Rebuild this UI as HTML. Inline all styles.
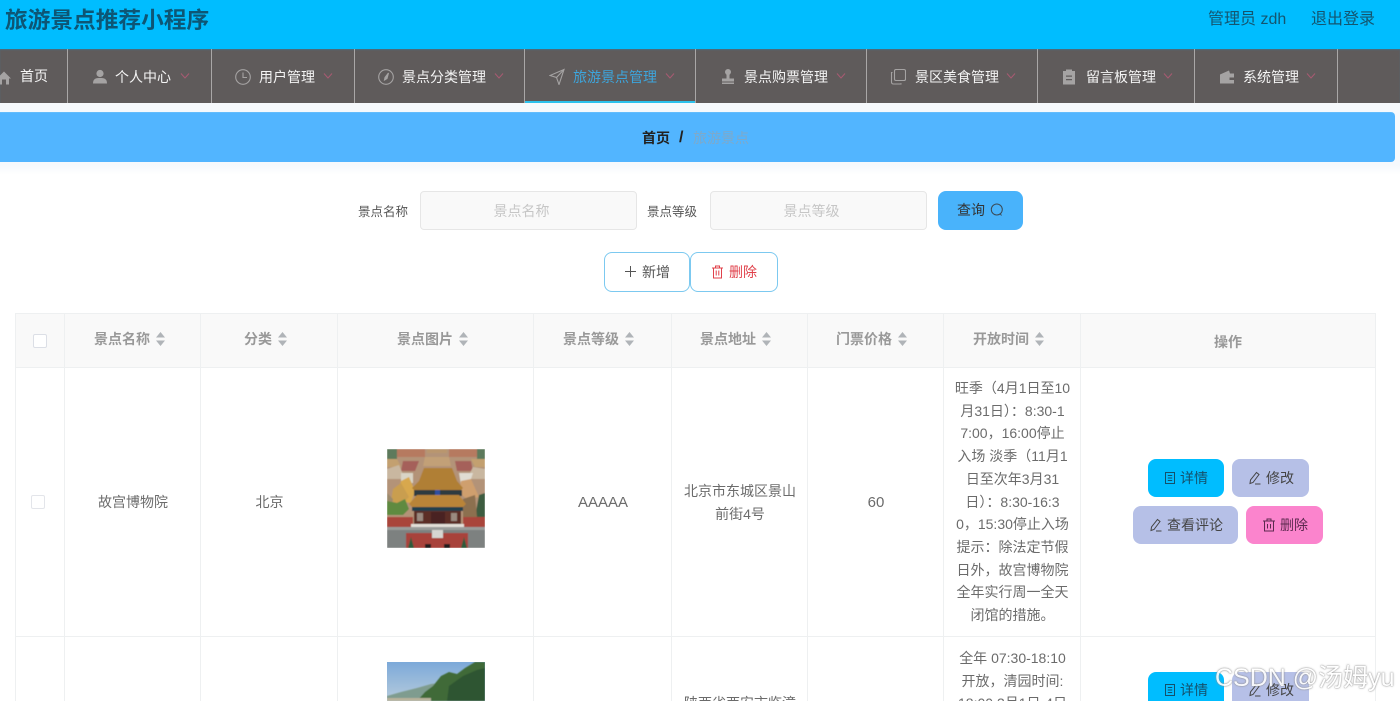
<!DOCTYPE html>
<html lang="zh"><head><meta charset="utf-8"><title>旅游景点推荐小程序</title>
<style>
*{box-sizing:border-box}
html{margin:0;padding:0;width:1400px;height:701px;overflow:hidden}
body{margin:0;padding:0;width:1400px;height:701px;overflow:hidden;position:relative;background:#fff;font-family:"Liberation Sans","Noto Sans CJK SC",sans-serif;color:#666}
.a{position:absolute;white-space:nowrap}
.c{position:absolute;text-align:center}
.nav{position:absolute;top:49px;height:54px;left:0;width:1400px;background:#5f5b5b;box-shadow:inset 0 1px 1px #4a6f80}
.sep{position:absolute;top:49px;width:1px;height:54px;background:#a9a7a7}
.ni{position:absolute;top:68px;font-size:14px;line-height:18px;color:#f4f4f4;white-space:nowrap}
.chev{position:absolute;top:73px;width:10px;height:6px}
.nicon{position:absolute;top:68px;width:16px;height:17px}
.line{position:absolute;background:#eef0f1}
.th{position:absolute;top:330px;font-size:14px;line-height:18px;font-weight:700;color:#999;white-space:nowrap}
.sort{position:absolute;top:332px;width:9px;height:14px}
.td{position:absolute;font-size:14px;color:#6b6b6b;text-align:center;line-height:22.7px}
.btn{position:absolute;height:38px;border-radius:8px;font-size:14px;line-height:38px;color:#444;white-space:nowrap}
.btn svg{position:absolute;top:12px;width:14px;height:14px}
.btn span{position:absolute;top:0}
</style></head><body>
<div class="a" style="left:0;top:0;width:1400px;height:49px;background:#00bdff"></div>
<div class="a" style="left:5px;top:6px;font-size:22.7px;line-height:28px;font-weight:700;color:#0d5675">旅游景点推荐小程序</div>
<div class="a" style="left:1208px;top:10px;font-size:16px;line-height:20px;color:#14556f">管理员 zdh</div>
<div class="a" style="left:1311px;top:10px;font-size:16px;line-height:20px;color:#14556f">退出登录</div>

<div class="nav"></div>
<div class="sep" style="left:67px"></div><div class="sep" style="left:211px"></div><div class="sep" style="left:354px"></div><div class="sep" style="left:524px"></div><div class="sep" style="left:695px"></div><div class="sep" style="left:866px"></div><div class="sep" style="left:1037px"></div><div class="sep" style="left:1194px"></div><div class="sep" style="left:1337px"></div>
<div class="a" style="left:525px;top:101px;width:170px;height:2px;background:#2cc1ec"></div>

<svg class="nicon" style="left:-4px;top:69px" viewBox="0 0 16 16"><path d="M8 2 15 9H13V15H10V10H6V15H3V9H1Z" fill="#a5a3a3"/></svg>
<div class="ni" style="left:20px;top:67px">首页</div>
<svg class="nicon" style="left:92px" viewBox="0 0 16 16"><circle cx="8" cy="5" r="3.6" fill="#a5a3a3"/><path d="M1 15C1 10 4 9.500 8 9.500S15 10 15 15Z" fill="#a5a3a3"/></svg>
<div class="ni" style="left:115px">个人中心</div>
<svg class="nicon" style="left:235px" viewBox="0 0 16 16" fill="none" stroke="#a5a3a3" stroke-width="1.100"><circle cx="8" cy="8.500" r="7.300"/><path d="M8 4V9H12"/></svg>
<div class="ni" style="left:259px">用户管理</div>
<svg class="nicon" style="left:378px" viewBox="0 0 16 16" fill="none" stroke="#a5a3a3" stroke-width="1.100"><circle cx="8" cy="8.500" r="7.300"/><path d="M10.500 4.500 7 9 6.500 11.500 9 10Z" fill="#a5a3a3"/></svg>
<div class="ni" style="left:402px">景点分类管理</div>
<svg class="nicon" style="left:549px" viewBox="0 0 16 16" fill="none" stroke="#a5a3a3" stroke-width="1.100"><path d="M15 1 1 7 7.500 9 10 16Z"/><path d="M7.500 9 15 1"/></svg>
<div class="ni" style="left:573px;color:#3da5dc">旅游景点管理</div>
<svg class="nicon" style="left:720px" viewBox="0 0 16 16"><circle cx="8" cy="3.500" r="3" fill="#a5a3a3"/><path d="M6.500 6H9.500V10H14V13H2V10H6.500ZM2 14H14V15.500H2Z" fill="#a5a3a3"/></svg>
<div class="ni" style="left:744px">景点购票管理</div>
<svg class="nicon" style="left:890px" viewBox="0 0 16 16" fill="none" stroke="#a5a3a3" stroke-width="1.100"><rect x="4.500" y="1" width="11" height="11" rx="1.500"/><path d="M2.500 4H1.500V13.500Q1.500 15.500 3.500 15.500H11V14.800"/></svg>
<div class="ni" style="left:915px">景区美食管理</div>
<svg class="nicon" style="left:1061px" viewBox="0 0 16 16"><path d="M2 2.500H5V1H11V2.500H14V16H2ZM5 7V8.200H11V7ZM5 10.500V11.700H11V10.500Z" fill="#a5a3a3"/></svg>
<div class="ni" style="left:1086px">留言板管理</div>
<svg class="nicon" style="left:1219px" viewBox="0 0 16 16"><path d="M1 6 10 2 11 5H15V15H1ZM10.500 9V11.500H15V9Z" fill="#a5a3a3"/></svg>
<div class="ni" style="left:1243px">系统管理</div>

<svg class="chev" style="left:180px" viewBox="0 0 10 6" fill="none" stroke="#a85a72" stroke-width="1"><path d="M1 .5 5 5 9 .5"/></svg>
<svg class="chev" style="left:323px" viewBox="0 0 10 6" fill="none" stroke="#a85a72" stroke-width="1"><path d="M1 .5 5 5 9 .5"/></svg>
<svg class="chev" style="left:494px" viewBox="0 0 10 6" fill="none" stroke="#a85a72" stroke-width="1"><path d="M1 .5 5 5 9 .5"/></svg>
<svg class="chev" style="left:665px" viewBox="0 0 10 6" fill="none" stroke="#a85a72" stroke-width="1"><path d="M1 .5 5 5 9 .5"/></svg>
<svg class="chev" style="left:836px" viewBox="0 0 10 6" fill="none" stroke="#a85a72" stroke-width="1"><path d="M1 .5 5 5 9 .5"/></svg>
<svg class="chev" style="left:1006px" viewBox="0 0 10 6" fill="none" stroke="#a85a72" stroke-width="1"><path d="M1 .5 5 5 9 .5"/></svg>
<svg class="chev" style="left:1163px" viewBox="0 0 10 6" fill="none" stroke="#a85a72" stroke-width="1"><path d="M1 .5 5 5 9 .5"/></svg>
<svg class="chev" style="left:1306px" viewBox="0 0 10 6" fill="none" stroke="#a85a72" stroke-width="1"><path d="M1 .5 5 5 9 .5"/></svg>

<div class="a" style="left:0;top:103px;width:1400px;height:72px;background:linear-gradient(#f6f9fc 0,#f6f9fc 62px,#fff 100%)"></div>
<div class="a" style="left:-6px;top:112px;width:1401px;height:50px;background:#52b5ff;border-radius:4px;border-top:1px solid #63bcfc"></div>
<div class="a" style="left:642px;top:129px;font-size:14px;line-height:18px;font-weight:700;color:#222">首页</div>
<div class="a" style="left:679px;top:128px;font-size:16px;line-height:20px;font-weight:700;color:#222">/</div>
<div class="a" style="left:693px;top:129px;font-size:14px;line-height:18px;color:#7fa9c9">旅游景点</div>

<div class="a" style="left:358px;top:204px;font-size:12.5px;line-height:16px;color:#555">景点名称</div>
<div class="c" style="left:420px;top:191px;width:217px;height:39px;background:#f9f9f9;border:1px solid #e6e6e6;border-radius:4px;font-size:14px;line-height:38px;color:#c6c6c6;padding-right:14px">景点名称</div>
<div class="a" style="left:647px;top:204px;font-size:12.5px;line-height:16px;color:#555">景点等级</div>
<div class="c" style="left:710px;top:191px;width:217px;height:39px;background:#f9f9f9;border:1px solid #e6e6e6;border-radius:4px;font-size:14px;line-height:38px;color:#c6c6c6;padding-right:14px">景点等级</div>
<div class="a" style="left:938px;top:191px;width:85px;height:39px;background:#49b3fb;border-radius:8px"></div>
<div class="a" style="left:957px;top:201px;font-size:14px;line-height:18px;color:#333">查询</div>
<svg class="a" style="left:990px;top:203px;width:14px;height:14px" viewBox="0 0 14 14" fill="none" stroke="#3b4a55" stroke-width="1"><circle cx="6.800" cy="6.500" r="5.500"/><path d="M10 10.500 11.500 12.500"/></svg>

<div class="a" style="left:604px;top:252px;width:86px;height:40px;border:1px solid #7cc9f0;border-radius:8px;background:#fff"></div>
<div class="a" style="left:690px;top:252px;width:88px;height:40px;border:1px solid #7cc9f0;border-radius:8px;background:#fff"></div>
<svg class="a" style="left:624px;top:265px;width:13px;height:13px" viewBox="0 0 13 13" stroke="#555" stroke-width="1"><path d="M6.500 1V12M1 6.500H12"/></svg>
<div class="a" style="left:642px;top:263px;font-size:14px;line-height:18px;color:#555">新增</div>
<svg class="a" style="left:711px;top:265px;width:13px;height:14px" viewBox="0 0 13 14" fill="none" stroke="#e0404a" stroke-width="1"><path d="M1 3H12M4.500 3V1H8.500V3M2.500 3V13H10.500V3M5.200 5.500V10.500M7.800 5.500V10.500"/></svg>
<div class="a" style="left:729px;top:263px;font-size:14px;line-height:18px;color:#e0404a">删除</div>

<div class="a" style="left:15px;top:313px;width:1361px;height:55px;background:#f9f9f9"></div>
<div class="line" style="left:15px;top:313px;width:1361px;height:1px"></div>
<div class="line" style="left:15px;top:367px;width:1361px;height:1px"></div>
<div class="line" style="left:15px;top:636px;width:1361px;height:1px"></div>
<div class="line" style="left:15px;top:313px;width:1px;height:388px"></div>
<div class="line" style="left:64px;top:313px;width:1px;height:388px"></div>
<div class="line" style="left:200px;top:313px;width:1px;height:388px"></div>
<div class="line" style="left:337px;top:313px;width:1px;height:388px"></div>
<div class="line" style="left:533px;top:313px;width:1px;height:388px"></div>
<div class="line" style="left:671px;top:313px;width:1px;height:388px"></div>
<div class="line" style="left:807px;top:313px;width:1px;height:388px"></div>
<div class="line" style="left:943px;top:313px;width:1px;height:388px"></div>
<div class="line" style="left:1080px;top:313px;width:1px;height:388px"></div>
<div class="line" style="left:1375px;top:313px;width:1px;height:388px"></div>

<div class="a" style="left:33px;top:334px;width:14px;height:14px;border:1px solid #dcdfe6;border-radius:2px;background:#fff"></div>
<div class="th" style="left:94px">景点名称</div>
<div class="th" style="left:244px">分类</div>
<div class="th" style="left:397px">景点图片</div>
<div class="th" style="left:563px">景点等级</div>
<div class="th" style="left:700px">景点地址</div>
<div class="th" style="left:836px">门票价格</div>
<div class="th" style="left:973px">开放时间</div>
<div class="th" style="left:1214px;top:333px">操作</div>
<svg class="sort" style="left:156px" viewBox="0 0 9 14" fill="#b0b4b8"><path d="M4.500 0 9 5.500H0ZM4.500 14 0 8.500H9Z"/></svg>
<svg class="sort" style="left:278px" viewBox="0 0 9 14" fill="#b0b4b8"><path d="M4.500 0 9 5.500H0ZM4.500 14 0 8.500H9Z"/></svg>
<svg class="sort" style="left:459px" viewBox="0 0 9 14" fill="#b0b4b8"><path d="M4.500 0 9 5.500H0ZM4.500 14 0 8.500H9Z"/></svg>
<svg class="sort" style="left:625px" viewBox="0 0 9 14" fill="#b0b4b8"><path d="M4.500 0 9 5.500H0ZM4.500 14 0 8.500H9Z"/></svg>
<svg class="sort" style="left:762px" viewBox="0 0 9 14" fill="#b0b4b8"><path d="M4.500 0 9 5.500H0ZM4.500 14 0 8.500H9Z"/></svg>
<svg class="sort" style="left:898px" viewBox="0 0 9 14" fill="#b0b4b8"><path d="M4.500 0 9 5.500H0ZM4.500 14 0 8.500H9Z"/></svg>
<svg class="sort" style="left:1035px" viewBox="0 0 9 14" fill="#b0b4b8"><path d="M4.500 0 9 5.500H0ZM4.500 14 0 8.500H9Z"/></svg>

<div class="a" style="left:31px;top:495px;width:14px;height:14px;border:1px solid #e3e5ea;border-radius:2px;background:#fff"></div>
<div class="td" style="left:65px;top:491px;width:136px">故宫博物院</div>
<div class="td" style="left:201px;top:491px;width:137px">北京</div>
<div class="td" style="left:534px;top:492px;width:138px;font-size:15px">AAAAA</div>
<div class="td" style="left:672px;top:480px;width:136px">北京市东城区景山<br>前街4号</div>
<div class="td" style="left:808px;top:492px;width:136px;font-size:15px">60</div>
<div class="td" style="left:944px;top:377px;width:137px">旺季（4月1日至10<br>月31日）：8:30-1<br>7:00，16:00停止<br>入场 淡季（11月1<br>日至次年3月31<br>日）：8:30-16:3<br>0，15:30停止入场<br>提示：除法定节假<br>日外，故宫博物院<br>全年实行周一全天<br>闭馆的措施。</div>

<svg class="a" style="left:387px;top:449px;width:98px;height:99px" viewBox="0 0 98 99" preserveAspectRatio="none">
<defs><filter id="b1" x="0" y="0" width="100%" height="100%"><feGaussianBlur stdDeviation=".6"/></filter></defs>
<g filter="url(#b1)">
<rect width="98" height="99" fill="#b39378"/>
<rect x="0" y="0" width="10" height="10" fill="#5d7a5c"/><rect x="90" y="0" width="8" height="10" fill="#5d7a5c"/>
<path d="M10 0H38V8H10ZM62 0H90V8H62Z" fill="#b67a60"/>
<path d="M40 0H60V4H40Z" fill="#b9966e"/><path d="M38 8H62L64 17H36Z" fill="#c2a077"/>
<path d="M0 10H10L14 18H0ZM84 10H98V18H88Z" fill="#c3a070"/>
<path d="M16 12H32L28 22H14ZM68 12H84L86 22H70Z" fill="#a5605a"/>
<path d="M0 20 12 16 18 30H0ZM98 20 86 18 80 30H98Z" fill="#c9b7a0"/>
<path d="M72 24 86 24 82 36H74Z" fill="#e0dcd2"/><path d="M14 24H26V34H14Z" fill="#d9d4c6"/>
<path d="M14 32 22 28 28 42 24 54 8 52Z" fill="#d8a84e"/><path d="M6 40 14 34 22 48 14 56 4 52Z" fill="#c99e4f"/>
<path d="M84 30 74 32 72 44 80 50 92 48Z" fill="#cf9f6e"/>
<path d="M0 44 6 50 4 62 0 66Z" fill="#9b8a6c"/><path d="M0 52 10 54 18 50 22 60 16 66H0Z" fill="#5f8a3f"/>
<path d="M92 46 98 44V68H88Z" fill="#3e5c40"/><path d="M76 50 88 46 90 68H76Z" fill="#8c6f4f"/>
<path d="M37 19H65L70 32 76 39 73 42H28L25 39 32 32Z" fill="#b07f35"/>
<rect x="27" y="41" width="48" height="6" fill="#2d3a3f"/><rect x="48" y="41" width="5" height="6" fill="#2f4fa0"/>
<path d="M30 46H72L79 55 76 58H25L22 55Z" fill="#b98438"/>
<rect x="25" y="58" width="51" height="4" fill="#24414e"/>
<rect x="27" y="62" width="47" height="15" fill="#5b2f28"/>
<rect x="30" y="64" width="6" height="8" fill="#9a8a80"/><rect x="64" y="64" width="6" height="8" fill="#9a8a80"/><rect x="44" y="63" width="14" height="14" fill="#4a2320"/>
<rect x="0" y="68" width="26" height="10" fill="#a9453a"/><rect x="76" y="68" width="22" height="10" fill="#a9453a"/>
<rect x="24" y="75" width="53" height="4" fill="#e3dfd8"/>
<rect x="0" y="78" width="98" height="21" fill="#7d8180"/>
<rect x="0" y="78" width="98" height="3" fill="#9a9c9a"/>
<rect x="19" y="84" width="62" height="15" fill="#a8423a"/>
<rect x="45" y="81" width="11" height="8" fill="#d6d6d2"/>
<rect x="38" y="95" width="6" height="4" fill="#241a1a"/><rect x="57" y="95" width="6" height="4" fill="#241a1a"/>
<path d="M21 99 24 88 27 99ZM74 99 77 88 80 99Z" fill="#2f5a3a"/>
</g></svg>

<div class="btn" style="left:1148px;top:459px;width:76px;background:#00bdff;color:#14506b">
<svg style="left:15px" viewBox="0 0 14 14" fill="none" stroke="#14506b" stroke-width="1"><path d="M2.500 1.500H11.500V12.500H2.500ZM4.800 4.500H9.200M4.800 7H9.200M4.800 9.500H9.200"/></svg><span style="left:32px">详情</span></div>
<div class="btn" style="left:1232px;top:459px;width:77px;background:#b6c0e7">
<svg style="left:16px" viewBox="0 0 14 14" fill="none" stroke="#444" stroke-width="1"><path d="M8.500 1.500 11 3.500 5 11.500 2 12.500 2.500 9ZM7 13H12.500"/></svg><span style="left:34px">修改</span></div>
<div class="btn" style="left:1133px;top:506px;width:105px;background:#b6c0e7">
<svg style="left:16px" viewBox="0 0 14 14" fill="none" stroke="#444" stroke-width="1"><path d="M8.500 1.500 11 3.500 5 11.500 2 12.500 2.500 9ZM7 13H12.500"/></svg><span style="left:34px">查看评论</span></div>
<div class="btn" style="left:1246px;top:506px;width:77px;background:#fb84cd">
<svg style="left:16px" viewBox="0 0 14 14" fill="none" stroke="#5d2a50" stroke-width="1"><path d="M1 3H13M5 3V1H9V3M2.500 3V13H11.500V3M5.500 6V10.500M8.500 6V10.500"/></svg><span style="left:34px;color:#5d2a50">删除</span></div>

<svg class="a" style="left:387px;top:662px;width:98px;height:39px" viewBox="0 0 98 39" preserveAspectRatio="none">
<defs><linearGradient id="sky" x1="0" y1="0" x2="0" y2="1"><stop offset="0" stop-color="#7ca9d9"/><stop offset="1" stop-color="#b6cbdc"/></linearGradient><filter id="b2" x="0" y="0" width="100%" height="100%"><feGaussianBlur stdDeviation=".6"/></filter></defs>
<rect width="98" height="39" fill="url(#sky)"/>
<g filter="url(#b2)">
<path d="M0 34 14 30 30 26 44 22 60 20 72 24V39H0Z" fill="#7f9c8f"/>
<path d="M30 39 38 30 46 24 54 14 62 10 70 12 78 6 88 0H98V39Z" fill="#3f6a38"/>
<path d="M62 24 76 14 90 8 98 6V39H60Z" fill="#2f5530"/>
<path d="M0 36H44V39H0Z" fill="#b9b39b"/>
</g></svg>

<div class="td" style="left:672px;top:692px;width:136px">陕西省西安市临潼</div>
<div class="td" style="left:944px;top:647px;width:137px">全年 07:30-18:10<br>开放，清园时间:<br>18:00 3月1日-4日</div>

<div class="btn" style="left:1148px;top:672px;width:76px;background:#00bdff;color:#14506b">
<svg style="left:15px;top:11px" viewBox="0 0 14 14" fill="none" stroke="#14506b" stroke-width="1"><path d="M2.500 1.500H11.500V12.500H2.500ZM4.800 4.500H9.200M4.800 7H9.200M4.800 9.500H9.200"/></svg><span style="left:32px;top:-1px">详情</span></div>
<div class="btn" style="left:1232px;top:672px;width:77px;background:#b6c0e7">
<svg style="left:16px;top:11px" viewBox="0 0 14 14" fill="none" stroke="#444" stroke-width="1"><path d="M8.500 1.500 11 3.500 5 11.500 2 12.500 2.500 9ZM7 13H12.500"/></svg><span style="left:34px;top:-1px">修改</span></div>

<div class="a" style="left:1215px;top:662px;font-size:25px;line-height:32px;color:#fff;opacity:.9;text-shadow:0 0 1px #777,0 0 2px #999">CSDN @汤姆yu</div>
</body></html>
